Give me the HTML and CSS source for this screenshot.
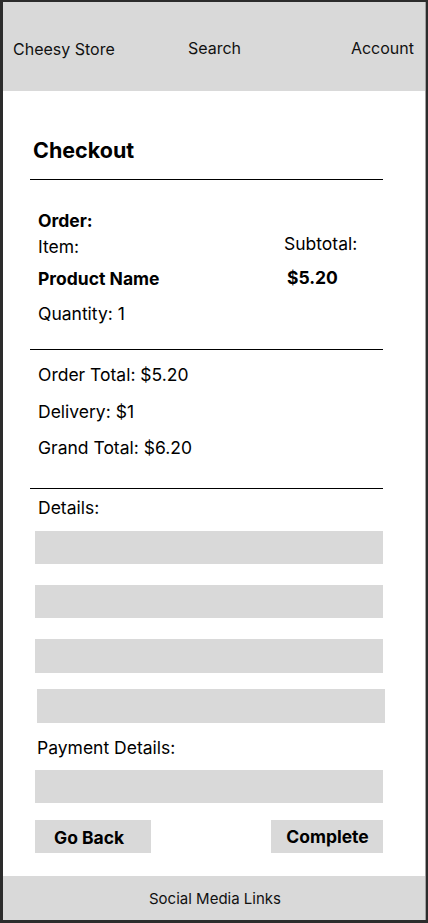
FILE: index.html
```html
<!DOCTYPE html>
<html lang="en">
<head>
<meta charset="utf-8">
<title>Checkout - Cheesy Store</title>
<link rel="stylesheet" href="styles.css">
</head>
<body>
<div class="frame">
  <header class="topbar">
    <span class="brand">Cheesy Store</span>
    <span class="nav-search">Search</span>
    <span class="nav-account">Account</span>
  </header>
  <main class="content">
    <h1 class="title">Checkout</h1>
    <hr class="rule">
    <section class="order">
      <div class="order-head">Order:</div>
      <div class="order-item">Item:</div>
      <div class="order-sub">Subtotal:</div>
      <div class="order-name">Product Name</div>
      <div class="order-price">$5.20</div>
      <div class="order-qty">Quantity: 1</div>
    </section>
    <hr class="rule">
    <section class="totals">
      <div class="line">Order Total: $5.20</div>
      <div class="line">Delivery: $1</div>
      <div class="line">Grand Total: $6.20</div>
    </section>
    <hr class="rule">
    <section class="details">
      <div class="label">Details:</div>
      <div class="field f1"></div>
      <div class="field f2"></div>
      <div class="field f3"></div>
      <div class="field f4"></div>
      <div class="label pay-label">Payment Details:</div>
      <div class="field f5"></div>
      <div class="actions">
        <button class="btn btn-back">Go Back</button>
        <button class="btn btn-complete">Complete</button>
      </div>
    </section>
  </main>
  <footer class="footer">Social Media Links</footer>
</div>
</body>
</html>
```

FILE: styles.css
```css
html, body {
  margin: 0;
  padding: 0;
}
body {
  background: #2c2c2c;
  font-family: Inter, "Noto Sans", Arial, sans-serif;
  color: #000;
  width: 428px;
  height: 923px;
  overflow: hidden;
}
.frame {
  margin: 2px 0 0 3px;
  width: 423px;
  height: 918px;
  background: #fff;
  display: flex;
  flex-direction: column;
  border-right: 1px solid #a0a0a0;
  box-sizing: border-box;
}
.topbar {
  height: 89px;
  flex: none;
  background: #d9d9d9;
  display: grid;
  grid-template-columns: 1fr auto 1fr;
  align-items: center;
  padding: 0 11px 0 10px;
  font-size: 16px;
  line-height: 20px;
  color: #111;
}
.brand { padding-top: 5px; }
.nav-search { padding-left: 2px; padding-top: 3px; }
.nav-account { justify-self: end; padding-top: 3px; }
.content {
  flex: 1;
  margin-left: 27px;
  width: 353px;
}
.title {
  margin: 47px 0 0 3px;
  font-size: 21.5px;
  line-height: 24px;
  font-weight: 700;
}
.rule {
  margin: 0;
  border: 0;
  border-top: 1px solid #000;
  height: 0;
}
.title + .rule { margin-top: 17px; }
.order {
  display: grid;
  grid-template-columns: 246px 1fr;
  padding: 30px 0 24px 8px;
  font-size: 17.5px;
  line-height: 22px;
}
.order-head { grid-column: 1 / 3; font-weight: 700; }
.order-item { margin-top: 4px; }
.order-sub { margin-top: 1px; }
.order-name { margin-top: 10px; font-weight: 700; }
.order-price { margin-top: 9px; padding-left: 3px; font-weight: 700; }
.order-qty { grid-column: 1 / 3; margin-top: 13px; }
.totals {
  padding: 14px 0 29px 8px;
  display: flex;
  flex-direction: column;
  gap: 15px;
  font-size: 17.5px;
  line-height: 22px;
}
.totals .line:last-child { margin-top: -1px; }
.details {
  padding: 8px 0 0 0;
  display: flex;
  flex-direction: column;
  font-size: 17.5px;
  line-height: 22px;
}
.label { padding-left: 8px; }
.field {
  background: #d9d9d9;
  height: 33px;
  margin-left: 5px;
  width: 348px;
}
.f1 { margin-top: 12px; }
.f2 { margin-top: 21px; }
.f3 { margin-top: 21px; height: 34px; }
.f4 { margin-top: 16px; height: 34px; margin-left: 7px; }
.pay-label { margin-top: 14px; padding-left: 7px; }
.f5 { margin-top: 11px; }
.actions {
  margin-top: 17px;
  margin-left: 5px;
  width: 348px;
  display: flex;
  justify-content: space-between;
}
.btn {
  height: 33px;
  border: 0;
  background: #d9d9d9;
  font-family: inherit;
  font-size: 17.5px;
  font-weight: 700;
  color: #000;
  padding: 0;
}
.btn-back {
  width: 116px;
  text-align: left;
  padding: 2px 0 0 19px;
}
.btn-complete {
  width: 112px;
  padding: 0 0 1px 1px;
}
.footer {
  flex: none;
  height: 44px;
  background: #d9d9d9;
  display: flex;
  align-items: center;
  justify-content: center;
  font-size: 15px;
  color: #111;
  padding: 0 0 0 2px;
}
```
